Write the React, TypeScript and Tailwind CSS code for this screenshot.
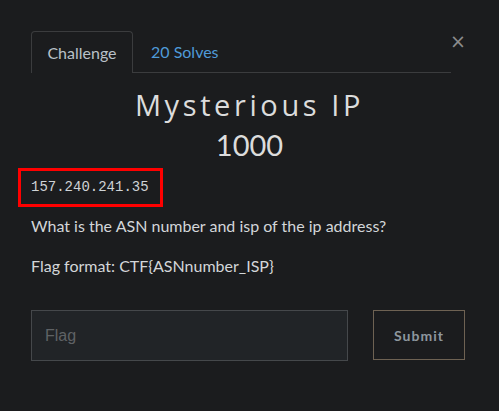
import React from "react";

const App: React.FC = () => {
    return (
        <div className="w-[499px] h-[411px] bg-[#1b1c1e] overflow-hidden font-['Lato','Liberation_Sans',sans-serif]">
            <div className="flex items-start pl-[31px] pt-[31px]">
                <ul className="flex w-[420px] h-[42px] border-b border-[#3b3c3e]">
                    <li className="w-[102px] h-[42px] flex items-center justify-center border border-b-0 border-[#3b3c3e] rounded-t-[4px] text-[16px] text-[#b9c1c8] bg-[#1b1c1e]">
                        Challenge
                    </li>
                    <li className="h-[41px] flex items-center pl-[18px] text-[16px] text-[#4f9ad8]">
                        20 Solves
                    </li>
                </ul>
                <button className="ml-[1px] mt-[3px] w-[12px] h-[14px] flex items-center justify-center text-[#8c8c8c] text-[19px] leading-none font-['DejaVu_Sans',sans-serif]">
                    ×
                </button>
            </div>

            <div className="flex flex-col items-center mt-[14px]">
                <h2 className="text-[29px] leading-[36px] font-normal tracking-[3.6px] text-[#dcdcdc] font-['Open_Sans',sans-serif]">
                    Mysterious IP
                </h2>
                <h3 className="text-[29px] leading-[36px] font-normal text-[#dcdcdc] mt-[4px]">
                    1000
                </h3>
            </div>

            <div className="pl-[18px] mt-[5px]">
                <div className="w-[145px] h-[39px] border-[3px] border-[#ff0000] flex items-center pl-[10px] font-['Liberation_Mono',monospace] text-[14px] text-[#cfd3d6]">
                    157.240.241.35
                </div>
            </div>

            <div className="pl-[31px] text-[16px] text-[#d3d6d9]">
                <p className="mt-[9px] leading-[20px]">What is the ASN number and isp of the ip address?</p>
                <p className="mt-[20px] leading-[20px]">Flag format: CTF{"{"}ASNnumber_ISP{"}"}</p>
            </div>

            <div className="flex items-start pl-[31px] mt-[34px] gap-[25px]">
                <input
                    type="text"
                    placeholder="Flag"
                    className="w-[317px] h-[51px] bg-[#212427] border border-[#45484b] px-[13px] text-[16px] text-[#cccccc] placeholder:text-[#5f6265] outline-none font-['Liberation_Sans',sans-serif]"
                />
                <button className="w-[92px] h-[50px] border border-[#6e6253] text-[14px] font-bold tracking-[1px] text-[#8e979e]">
                    Submit
                </button>
            </div>
        </div>
    );
};

export default App;
